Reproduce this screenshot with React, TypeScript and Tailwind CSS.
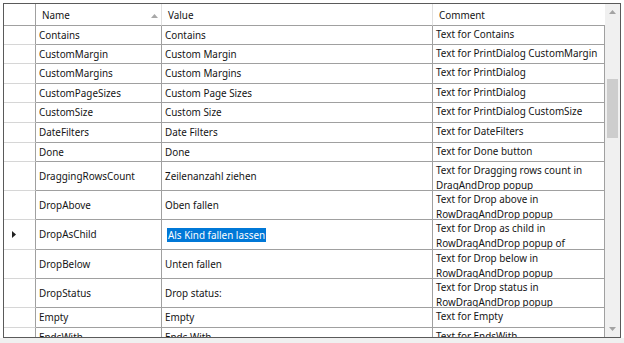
import React from "react";

type Row = { name: string; value: string; comment: string; h: number; current?: boolean };

const rows: Row[] = [
  { name: "Contains", value: "Contains", comment: "Text for Contains", h: 19 },
  { name: "CustomMargin", value: "Custom Margin", comment: "Text for PrintDialog CustomMargin", h: 19 },
  { name: "CustomMargins", value: "Custom Margins", comment: "Text for PrintDialog CustomMargins", h: 20 },
  { name: "CustomPageSizes", value: "Custom Page Sizes", comment: "Text for PrintDialog CustomPageSizes", h: 19 },
  { name: "CustomSize", value: "Custom Size", comment: "Text for PrintDialog CustomSize", h: 20 },
  { name: "DateFilters", value: "Date Filters", comment: "Text for DateFilters", h: 20 },
  { name: "Done", value: "Done", comment: "Text for Done button", h: 19 },
  { name: "DraggingRowsCount", value: "Zeilenanzahl ziehen", comment: "Text for Dragging rows count in DragAndDrop popup", h: 29 },
  { name: "DropAbove", value: "Oben fallen", comment: "Text for Drop above in RowDragAndDrop popup", h: 29 },
  { name: "DropAsChild", value: "Als Kind fallen lassen", comment: "Text for Drop as child in RowDragAndDrop popup of TreeList", h: 30, current: true },
  { name: "DropBelow", value: "Unten fallen", comment: "Text for Drop below in RowDragAndDrop popup", h: 29 },
  { name: "DropStatus", value: "Drop status:", comment: "Text for Drop status in RowDragAndDrop popup", h: 29 },
  { name: "Empty", value: "Empty", comment: "Text for Empty", h: 20 },
  { name: "EndsWith", value: "Ends With", comment: "Text for EndsWith", h: 20 },
];

export default function App() {
  return (
    <div
      className="w-[624px] h-[343px] bg-white relative overflow-hidden text-[9.9px] text-[#141414]"
      style={{ fontFamily: '"Noto Sans", "Open Sans", sans-serif' }}
    >
      <div className="h-[338px] pt-[3px] pl-[3px] pr-[3px] bg-white">
        <div className="h-[335px] w-[618px] border border-[#5a5a5a] flex overflow-hidden">
          {/* grid area */}
          <div className="w-[601px] flex flex-col overflow-hidden">
            {/* header */}
            <div className="flex h-[22px] shrink-0">
              <div className="w-[32px] shrink-0 border-r border-b border-[#a0a0a0]" />
              <div className="w-[126px] shrink-0 border-r border-r-[#e0e0e0] border-b border-b-[#a0a0a0] flex items-center pl-[6px] pt-[1px] relative">
                Name
                <svg className="absolute left-[115px] top-[10px]" width="7" height="4" viewBox="0 0 7 4">
                  <path d="M0 4 L3.5 0 L7 4 Z" fill="#a8a8a8" />
                </svg>
              </div>
              <div className="w-[271px] shrink-0 border-r border-r-[#e0e0e0] border-b border-b-[#a0a0a0] flex items-center pl-[6px] pt-[1px]">Value</div>
              <div className="w-[172px] shrink-0 border-b border-[#a0a0a0] flex items-center pl-[6px] pt-[1px]">Comment</div>
            </div>
            {rows.map((r) => (
              <div key={r.name} className="flex shrink-0" style={{ height: r.h }}>
                <div className="w-[32px] shrink-0 border-r border-r-[#a0a0a0] border-b border-b-[#d6d6d6] flex items-center pl-[8px]">
                  {r.current && (
                    <svg width="4" height="7" viewBox="0 0 4 7">
                      <path d="M0 0 L4 3.5 L0 7 Z" fill="#202020" />
                    </svg>
                  )}
                </div>
                <div className="w-[126px] shrink-0 border-r border-b border-[#a0a0a0] flex items-center pl-[3px] whitespace-nowrap overflow-hidden">
                  {r.name}
                </div>
                <div className="w-[271px] shrink-0 border-r border-b border-[#a0a0a0] flex items-center pl-[3px] whitespace-nowrap overflow-hidden">
                  {r.current ? (
                    <span className="bg-[#0078d7] text-white ml-[2px] px-[1px] leading-[14px]">{r.value}</span>
                  ) : (
                    <span>{r.value}</span>
                  )}
                </div>
                <div className="w-[172px] shrink-0 border-r border-b border-[#a0a0a0] pl-[3px] pr-[2px] pt-[0.5px] leading-[15px] overflow-hidden">
                  {r.comment}
                </div>
              </div>
            ))}
          </div>
          {/* scrollbar */}
          <div className="w-[15px] bg-[#f0f0f0] relative">
            <svg className="absolute top-[6px] left-[4px]" width="7" height="4" viewBox="0 0 7 4">
              <path d="M0 4 L3.5 0 L7 4 Z" fill="#a3a3a3" />
            </svg>
            <div className="absolute left-[2px] top-[75px] w-[11px] h-[59px] bg-[#cdcdcd]" />
            <svg className="absolute bottom-[6px] left-[4px]" width="7" height="4" viewBox="0 0 7 4">
              <path d="M0 0 L3.5 4 L7 0 Z" fill="#a3a3a3" />
            </svg>
          </div>
        </div>
      </div>
      <div className="h-[5px] bg-[#f0f0f0]" />
    </div>
  );
}
